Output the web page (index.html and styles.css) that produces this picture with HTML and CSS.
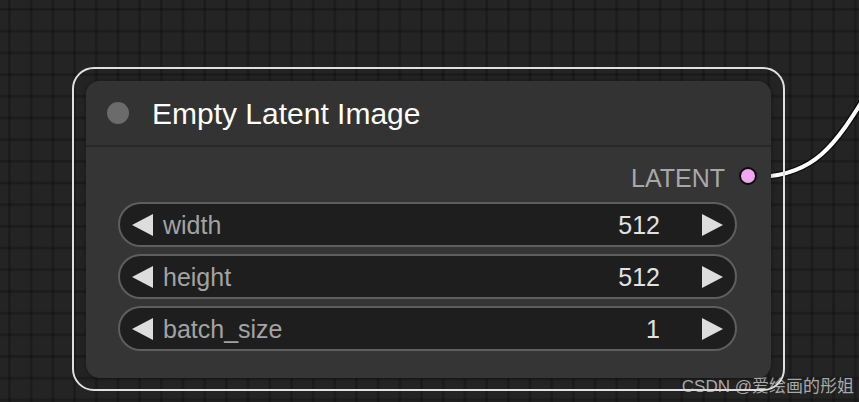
FILE: index.html
```html
<!DOCTYPE html>
<html>
<head>
<meta charset="utf-8">
<link rel="stylesheet" href="styles.css">
</head>
<body>
<div class="canvas">
  <svg class="wire" width="859" height="402" viewBox="0 0 859 402">
    <path d="M757 177 C 815 176, 835 145, 868 92" fill="none" stroke="#000" stroke-width="7" stroke-opacity="0.55"/>
    <path d="M757 177 C 815 176, 835 145, 868 92" fill="none" stroke="#fff" stroke-width="4"/>
  </svg>
  <div class="selection">
    <div class="node">
      <div class="node-title">
        <span class="status-dot"></span>
        <span class="title-text">Empty Latent Image</span>
      </div>
      <div class="node-body">
        <div class="output-row">
          <span class="output-label">LATENT</span>
          <span class="output-dot"></span>
        </div>
        <div class="widgets">
          <div class="widget">
            <svg class="arrow" width="21" height="22" viewBox="0 0 21 22"><polygon points="21,0 21,22 0,11" fill="#ddd"/></svg>
            <span class="w-label">width</span>
            <span class="w-value">512</span>
            <svg class="arrow right" width="21" height="22" viewBox="0 0 21 22"><polygon points="0,0 0,22 21,11" fill="#ddd"/></svg>
          </div>
          <div class="widget">
            <svg class="arrow" width="21" height="22" viewBox="0 0 21 22"><polygon points="21,0 21,22 0,11" fill="#ddd"/></svg>
            <span class="w-label">height</span>
            <span class="w-value">512</span>
            <svg class="arrow right" width="21" height="22" viewBox="0 0 21 22"><polygon points="0,0 0,22 21,11" fill="#ddd"/></svg>
          </div>
          <div class="widget">
            <svg class="arrow" width="21" height="22" viewBox="0 0 21 22"><polygon points="21,0 21,22 0,11" fill="#ddd"/></svg>
            <span class="w-label">batch_size</span>
            <span class="w-value">1</span>
            <svg class="arrow right" width="21" height="22" viewBox="0 0 21 22"><polygon points="0,0 0,22 21,11" fill="#ddd"/></svg>
          </div>
        </div>
      </div>
    </div>
  </div>
  <div class="watermark">CSDN @爱绘画的彤姐</div>
</div>
</body>
</html>
```

FILE: styles.css
```css
* { box-sizing: border-box; }
html, body {
  margin: 0;
  padding: 0;
  width: 859px;
  height: 402px;
  overflow: hidden;
  background: #222;
  font-family: "Liberation Sans", Arial, sans-serif;
}
.canvas {
  position: relative;
  width: 859px;
  height: 402px;
  background-color: #242424;
  background-image:
    linear-gradient(to right, rgba(0,0,0,0.12) 0, rgba(0,0,0,0.24) 1px, rgba(0,0,0,0.24) 2px, rgba(0,0,0,0.12) 3px, transparent 3px),
    linear-gradient(to bottom, rgba(0,0,0,0.12) 0, rgba(0,0,0,0.24) 1px, rgba(0,0,0,0.24) 2px, rgba(0,0,0,0.12) 3px, transparent 3px);
  background-size: 21.7px 21.7px;
  background-position: 8px 8px;
}
.wire {
  position: absolute;
  left: 0;
  top: 0;
}
.selection {
  position: absolute;
  left: 72px;
  top: 67px;
  width: 713px;
  height: 324px;
  border: 2px solid #e0e0e0;
  border-radius: 22px;
  padding: 12px 12px 11px 12px;
}
.node {
  width: 685px;
  height: 297px;
  background: #353535;
  border-radius: 14px;
  display: flex;
  flex-direction: column;
  box-shadow: 0 0 6px rgba(0,0,0,0.35);
}
.node-title {
  height: 66px;
  display: flex;
  align-items: center;
  padding-left: 21px;
  gap: 23px;
  background: #333;
  border-radius: 14px 14px 0 0;
  border-bottom: 2px solid #272727;
}
.status-dot {
  width: 22px;
  height: 22px;
  border-radius: 50%;
  background: #6b6b6b;
}
.title-text {
  color: #fff;
  font-size: 30px;
  line-height: 1;
  margin-top: 2px;
}
.node-body {
  padding: 11px 34px 0 32px;
}
.output-row {
  height: 40px;
  display: flex;
  justify-content: flex-end;
  align-items: center;
  gap: 14px;
  margin-right: -20px;
}
.output-label {
  color: #a8a8a8;
  font-size: 25px;
  line-height: 1;
  margin-top: 1px;
}
.output-dot {
  width: 18px;
  height: 18px;
  border-radius: 50%;
  background: #f2a6f0;
  border: 2px solid #0c0c0c;
  margin-top: -4px;
}
.widgets {
  margin-top: 4px;
  display: flex;
  flex-direction: column;
  gap: 7px;
}
.widget {
  height: 45px;
  border: 2px solid #5e5e5e;
  border-radius: 23px;
  background: #1e1e1e;
  display: flex;
  align-items: center;
  padding: 0 12px;
}
.arrow { display: block; flex: none; }
.w-label {
  margin-left: 10px;
  margin-top: 1px;
  color: #a3a3a3;
  font-size: 25px;
  line-height: 1;
  flex: 1;
}
.w-value {
  color: #e2e2e2;
  font-size: 25px;
  line-height: 1;
  margin-top: 1px;
  margin-right: 42px;
}
.watermark {
  position: absolute;
  right: 5px;
  bottom: 7px;
  color: rgba(215,215,215,0.75);
  font-family: "Liberation Sans", "Noto Sans CJK SC", sans-serif;
  font-size: 17px;
  line-height: 1;
}
```
